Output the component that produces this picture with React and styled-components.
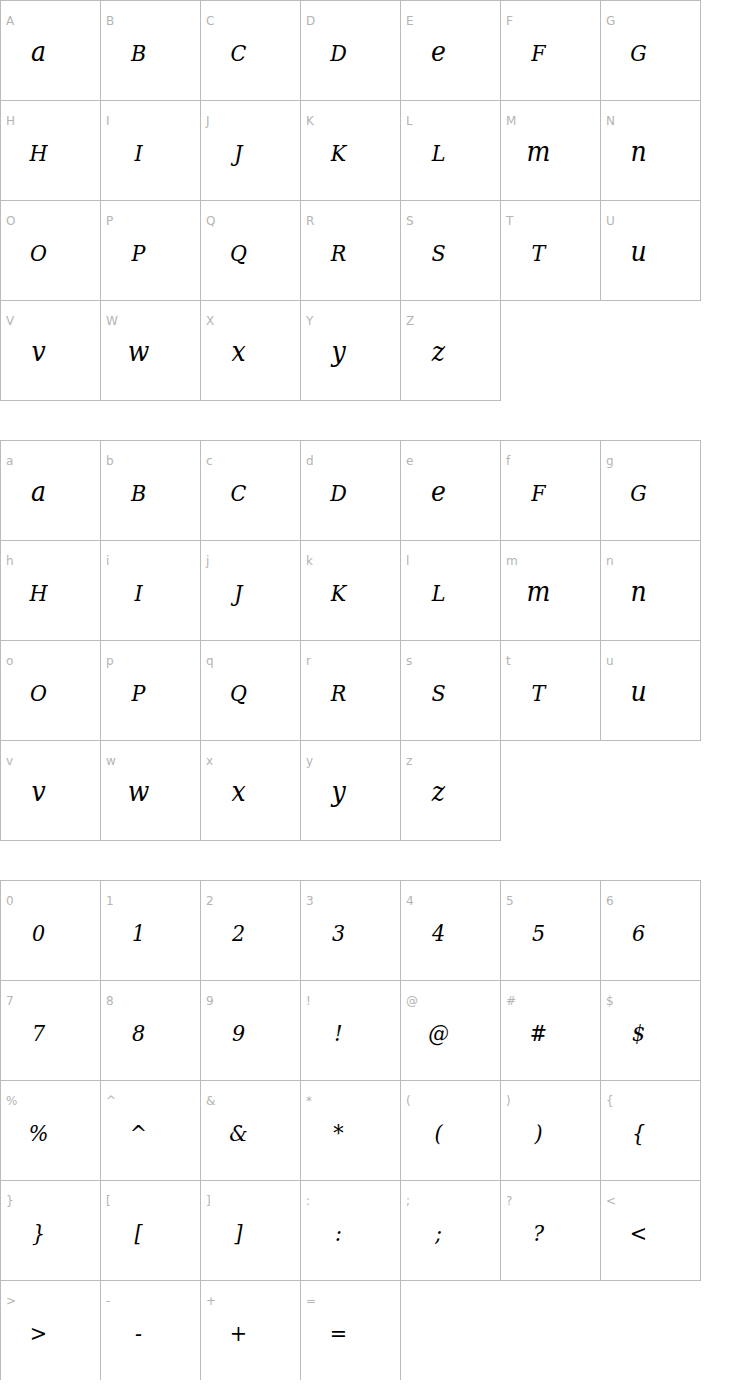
import styled, { createGlobalStyle } from 'styled-components'

const GlobalStyle = createGlobalStyle`
  body {
    margin: 0;
    background: #fff;
  }
`

const Page = styled.div`
  display: flex;
  flex-direction: column;
  gap: 40px;
`

const Grid = styled.div`
  display: flex;
  flex-wrap: wrap;
  width: 701px;
`

const Cell = styled.div`
  box-sizing: border-box;
  width: 101px;
  height: 101px;
  margin: 0 -1px -1px 0;
  border: 1px solid #bbb;
  padding: 13px 0 0 5px;
  display: flex;
  flex-direction: column;
`

const Label = styled.span`
  font-family: 'DejaVu Sans', sans-serif;
  font-size: 12px;
  line-height: 14px;
  color: #b4b4b4;
`

const Glyph = styled.span`
  width: 65px;
  margin-top: 13px;
  text-align: center;
  font-family: 'DejaVu Serif Condensed', 'DejaVu Serif', serif;
  font-stretch: condensed;
  font-style: italic;
  font-size: 23px;
  line-height: 24px;
  color: #000;
`

const Small = styled.span`
  font-size: 28px;
  line-height: 0;
`

const smallShapes = 'aemnuvwxyz'

const upper = 'ABCDEFGHIJKLMNOPQRSTUVWXYZ'.split('')
const lower = 'abcdefghijklmnopqrstuvwxyz'.split('')
const symbols = [
  '0', '1', '2', '3', '4', '5', '6',
  '7', '8', '9', '!', '@', '#', '$',
  '%', '^', '&', '*', '(', ')', '{',
  '}', '[', ']', ':', ';', '?', '<',
  '>', '-', '+', '=',
]

const renderGlyph = (c) => {
  const l = c.toLowerCase()
  if (smallShapes.includes(l)) return <Small>{l}</Small>
  return c.toUpperCase()
}

const CharGrid = ({ chars }) => (
  <Grid>
    {chars.map((c) => (
      <Cell key={c}>
        <Label>{c}</Label>
        <Glyph>{renderGlyph(c)}</Glyph>
      </Cell>
    ))}
  </Grid>
)

const App = () => {
  return (
    <>
      <GlobalStyle />
      <Page>
        <CharGrid chars={upper} />
        <CharGrid chars={lower} />
        <CharGrid chars={symbols} />
      </Page>
    </>
  )
}

export default App
